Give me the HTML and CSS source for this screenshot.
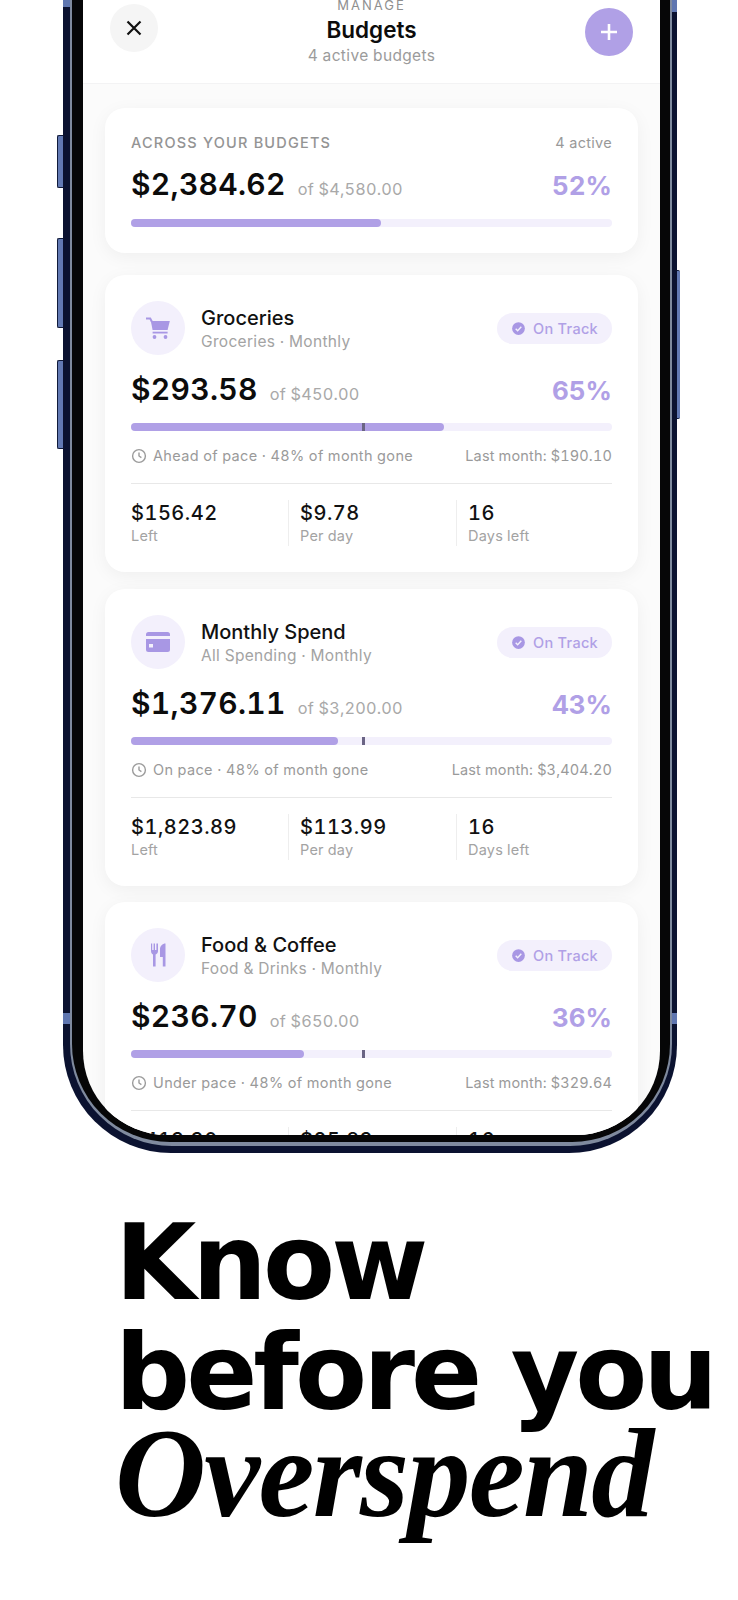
FILE: index.html
```html
<!DOCTYPE html>
<html>

	<head>
		<meta charset="UTF-8">
		<title>Budgets</title>
		<link rel="stylesheet" href="styles.css">
	</head>

	<body>
		<svg class="defs" width="0" height="0">
			<symbol id="clock" viewBox="0 0 16 16">
				<circle cx="8" cy="8" r="6.4" fill="none" stroke="#9b9b9b" stroke-width="1.4"/>
				<path d="M8 4.6V8l2.4 1.6" fill="none" stroke="#9b9b9b" stroke-width="1.4"/>
			</symbol>
			<symbol id="check" viewBox="0 0 16 16">
				<circle cx="8" cy="8" r="6.8" fill="#a897e4"/>
				<path d="M5 8.2l2.1 2.1L11 6.2" fill="none" stroke="#f3f0fc" stroke-width="1.5"/>
			</symbol>
		</svg>

		<div class="phone">
			<span class="side-btn btn-a"></span>
			<span class="side-btn btn-b"></span>
			<span class="side-btn btn-c"></span>
			<span class="side-btn btn-d"></span>
			<span class="band band-l"></span>
			<span class="band band-r"></span>
			<span class="band band-tl"></span>
			<span class="band band-tr"></span>
			<div class="rim">
				<div class="bezel">
					<div class="screen">
						<header class="top">
							<div class="round close">
								<svg width="18" height="18" viewBox="0 0 18 18"><path d="M2.5 2.5l13 13M15.5 2.5l-13 13" stroke="#111" stroke-width="2.2" fill="none"/></svg>
							</div>
							<div class="title">
								<div class="eyebrow">MANAGE</div>
								<h1>Budgets</h1>
								<div class="count">4 active budgets</div>
							</div>
							<div class="round plus">
								<svg width="20" height="20" viewBox="0 0 20 20"><path d="M10 2v16M2 10h16" stroke="#fff" stroke-width="2.6" fill="none"/></svg>
							</div>
						</header>

						<main class="list">
							<section class="card total">
								<div class="between">
									<span class="caps">ACROSS YOUR BUDGETS</span>
									<span class="active">4 active</span>
								</div>
								<div class="amount-row first">
									<div><span class="amount">$2,384.62</span><span class="of">of $4,580.00</span></div>
									<span class="pct">52%</span>
								</div>
								<div class="bar"><div class="fill" style="width:52%"></div></div>
							</section>

							<section class="card">
								<div class="between head">
									<div class="who">
										<div class="icon">
											<svg width="28" height="28" viewBox="0 0 28 28"><path d="M2 4.5h4.2l1.6 3" fill="none" stroke="#a897e4" stroke-width="2"/><path d="M6.8 7h19l-2.2 9H8.6z" fill="#a897e4"/><path d="M8.6 18.6h15" stroke="#a897e4" stroke-width="1.8"/><circle cx="10.5" cy="23" r="1.9" fill="#a897e4"/><circle cx="21.5" cy="23" r="1.9" fill="#a897e4"/></svg>
										</div>
										<div class="names">
											<h2>Groceries</h2>
											<div class="sub">Groceries · Monthly</div>
										</div>
									</div>
									<div class="pill"><svg width="15" height="15"><use href="#check"/></svg>On Track</div>
								</div>
								<div class="amount-row">
									<div><span class="amount">$293.58</span><span class="of">of $450.00</span></div>
									<span class="pct">65%</span>
								</div>
								<div class="bar"><div class="fill" style="width:65%"></div><i class="mark" style="left:48%"></i></div>
								<div class="between meta">
									<span class="pace"><svg width="16" height="16"><use href="#clock"/></svg>Ahead of pace · 48% of month gone</span>
									<span>Last month: $190.10</span>
								</div>
								<div class="stats">
									<div class="stat"><b>$156.42</b><span>Left</span></div>
									<div class="stat"><b>$9.78</b><span>Per day</span></div>
									<div class="stat"><b>16</b><span>Days left</span></div>
								</div>
							</section>

							<section class="card">
								<div class="between head">
									<div class="who">
										<div class="icon">
											<svg width="28" height="28" viewBox="0 0 28 28"><path d="M4.5 4h19A2.5 2.5 0 0 1 26 6.500V8H2V6.500A2.500 2.500 0 0 1 4.500 4zM2 11h24v10.500a2.500 2.500 0 0 1-2.500 2.500h-19A2.500 2.500 0 0 1 2 21.500zM5 16v3.500h4V16z" fill="#a897e4" fill-rule="evenodd"/></svg>
										</div>
										<div class="names">
											<h2>Monthly Spend</h2>
											<div class="sub">All Spending · Monthly</div>
										</div>
									</div>
									<div class="pill"><svg width="15" height="15"><use href="#check"/></svg>On Track</div>
								</div>
								<div class="amount-row">
									<div><span class="amount">$1,376.11</span><span class="of">of $3,200.00</span></div>
									<span class="pct">43%</span>
								</div>
								<div class="bar"><div class="fill" style="width:43%"></div><i class="mark" style="left:48%"></i></div>
								<div class="between meta">
									<span class="pace"><svg width="16" height="16"><use href="#clock"/></svg>On pace · 48% of month gone</span>
									<span>Last month: $3,404.20</span>
								</div>
								<div class="stats">
									<div class="stat"><b>$1,823.89</b><span>Left</span></div>
									<div class="stat"><b>$113.99</b><span>Per day</span></div>
									<div class="stat"><b>16</b><span>Days left</span></div>
								</div>
							</section>

							<section class="card">
								<div class="between head">
									<div class="who">
										<div class="icon">
											<svg width="28" height="28" viewBox="0 0 28 28"><path d="M7 2.500h1.200v6.500h1.400V2.500h1.400v6.500h1.400V2.500H14V10c0 1.900-1.100 3.100-2.400 3.600V25.500H9V13.600C7.900 13.100 7 11.900 7 10zM21.500 2.500V25.500H18.800V16H16V8c0-3 2.500-5.500 5.500-5.500z" fill="#a897e4"/></svg>
										</div>
										<div class="names">
											<h2>Food &amp; Coffee</h2>
											<div class="sub">Food &amp; Drinks · Monthly</div>
										</div>
									</div>
									<div class="pill"><svg width="15" height="15"><use href="#check"/></svg>On Track</div>
								</div>
								<div class="amount-row">
									<div><span class="amount">$236.70</span><span class="of">of $650.00</span></div>
									<span class="pct">36%</span>
								</div>
								<div class="bar"><div class="fill" style="width:36%"></div><i class="mark" style="left:48%"></i></div>
								<div class="between meta">
									<span class="pace"><svg width="16" height="16"><use href="#clock"/></svg>Under pace · 48% of month gone</span>
									<span>Last month: $329.64</span>
								</div>
								<div class="stats">
									<div class="stat"><b>$413.30</b><span>Left</span></div>
									<div class="stat"><b>$25.83</b><span>Per day</span></div>
									<div class="stat"><b>16</b><span>Days left</span></div>
								</div>
							</section>
						</main>
					</div>
				</div>
			</div>
		</div>

		<div class="tagline">
			<div class="sans">Know<br>before you</div>
			<div class="serif">Overspend</div>
		</div>
	</body>

</html>
```

FILE: styles.css
```css
html,
body {
	margin: 0;
	width: 738px;
	height: 1600px;
	overflow: hidden;
	background: #fff;
	font-family: Inter, "Liberation Sans", sans-serif;
	font-variant-numeric: tabular-nums;
}

h1,
h2 {
	margin: 0;
}

.defs {
	position: absolute;
}

/* phone frame */
.phone {
	position: relative;
	width: 614px;
	height: 1153px;
	box-sizing: border-box;
	margin-left: 63px;
	padding: 0 5px 7px 7px;
	background: #0b1230;
	border-radius: 0 0 108px 108px;
}

.rim {
	height: 100%;
	box-sizing: border-box;
	padding: 0 2px 4px 2px;
	background: #7f8a9e;
	border-radius: 0 0 102px 102px;
}

.bezel {
	height: 100%;
	box-sizing: border-box;
	padding: 0 10px 7px 11px;
	background: #060607;
	border-radius: 0 0 98px 98px;
}

.screen {
	height: 100%;
	overflow: hidden;
	background: #fbfbfb;
	border-radius: 0 0 84px 84px;
}

.side-btn {
	position: absolute;
	width: 6px;
	background: #6279b3;
	border: 1px solid #101a3a;
	border-right: 0;
	border-radius: 2px 0 0 2px;
	box-sizing: border-box;
}

.btn-a {
	left: -6px;
	top: 135px;
	height: 53px;
}

.btn-b {
	left: -6px;
	top: 238px;
	height: 90px;
}

.btn-c {
	left: -6px;
	top: 360px;
	height: 89px;
}

.btn-d {
	right: -3px;
	top: 270px;
	width: 3px;
	height: 149px;
	border-width: 1px 0;
	border-radius: 0 2px 2px 0;
}

.band {
	position: absolute;
	width: 7px;
	background: #5f76b0;
}

.band-l {
	left: 0;
	top: 1013px;
	height: 11px;
}

.band-r {
	right: 0;
	width: 5px;
	top: 1013px;
	height: 11px;
}

.band-tl {
	left: 0;
	top: 0;
	height: 7px;
}

.band-tr {
	right: 0;
	width: 5px;
	top: 0;
	height: 12px;
}

/* screen header */
.top {
	display: flex;
	justify-content: space-between;
	align-items: flex-start;
	height: 84px;
	box-sizing: border-box;
	padding: 4px 27px 0;
	background: #fff;
	border-bottom: 1px solid #f3f3f4;
}

.round {
	display: flex;
	align-items: center;
	justify-content: center;
	width: 48px;
	height: 48px;
	border-radius: 50%;
}

.close {
	background: #f5f5f5;
}

.plus {
	margin-top: 4px;
	background: #b0a0e6;
}

.title {
	margin-top: -7px;
	text-align: center;
}

.eyebrow {
	font-size: 13px;
	line-height: 16px;
	letter-spacing: 2px;
	color: #8f8f8f;
}

h1 {
	margin-top: 4px;
	font-size: 22.5px;
	line-height: 26px;
	font-weight: 600;
	color: #0c0c0c;
}

.count {
	margin-top: 3px;
	font-size: 15.5px;
	line-height: 20px;
	letter-spacing: 0.35px;
	color: #9b9b9b;
}

/* cards */
.list {
	display: flex;
	flex-direction: column;
	gap: 17px;
	padding: 24px 22px 0;
}

.card {
	padding: 26px;
	height: 297px;
	box-sizing: border-box;
	flex-shrink: 0;
	background: #fff;
	border-radius: 20px;
	box-shadow: 0 4px 18px rgba(0, 0, 0, 0.05);
}

.card:last-child {
	margin-top: -1px;
}

.total {
	height: 145px;
	margin-bottom: 5px;
}

.between {
	display: flex;
	justify-content: space-between;
	align-items: center;
}

.caps {
	font-size: 14.5px;
	line-height: 18px;
	font-weight: 500;
	letter-spacing: 1.2px;
	color: #949494;
}

.active {
	font-size: 14.500px;
	line-height: 18px;
	letter-spacing: 0.3px;
	color: #999;
}

.who {
	display: flex;
	align-items: center;
	gap: 16px;
}

.names {
	padding-top: 3px;
}

.icon {
	display: flex;
	align-items: center;
	justify-content: center;
	width: 54px;
	height: 54px;
	border-radius: 50%;
	background: #f3f0fc;
}

h2 {
	font-size: 20px;
	line-height: 24px;
	font-weight: 500;
	color: #111;
}

.sub {
	margin-top: 1px;
	font-size: 15.5px;
	line-height: 22px;
	letter-spacing: 0.32px;
	color: #a3a3a3;
}

.pill {
	display: flex;
	align-items: center;
	gap: 7px;
	height: 31px;
	padding: 0 14px;
	border-radius: 16px;
	background: #f3f0fc;
	font-size: 14.500px;
	font-weight: 500;
	letter-spacing: 0.3px;
	color: #b0a0e6;
}

.amount-row {
	display: flex;
	justify-content: space-between;
	align-items: baseline;
	height: 36px;
	margin-top: 16px;
	line-height: 36px;
}

.amount-row.first {
	margin-top: 14px;
}

.amount {
	font-size: 30px;
	font-weight: 600;
	letter-spacing: 0.3px;
	color: #0c0c0c;
}

.of {
	margin-left: 12px;
	font-size: 16.3px;
	letter-spacing: 0.2px;
	color: #a9a9a9;
}

.pct {
	font-size: 26px;
	font-weight: 700;
	color: #b0a0e6;
}

.bar {
	position: relative;
	height: 8px;
	margin-top: 16px;
	border-radius: 4px;
	background: #f3f0fc;
}

.first + .bar {
	margin-top: 17px;
}

.fill {
	height: 100%;
	border-radius: 4px;
	background: #b0a0e6;
}

.mark {
	position: absolute;
	top: 0;
	width: 3px;
	height: 8px;
	background: #6a6484;
}

.meta {
	margin-top: 16px;
	font-size: 14.500px;
	line-height: 18px;
	letter-spacing: 0.35px;
	color: #9a9a9a;
}

.meta span:last-child {
	letter-spacing: 0.15px;
}

.pace {
	display: flex;
	align-items: center;
	gap: 6px;
}

.stats {
	display: grid;
	grid-template-columns: 157px 168px 1fr;
	margin-top: 18px;
	padding-top: 16px;
	border-top: 1px solid #e8e8e8;
}

.stat {
	display: flex;
	flex-direction: column;
	padding-left: 11px;
	border-left: 1px solid #eee;
}

.stat:first-child {
	padding-left: 0;
	border-left: 0;
}

.stat b {
	font-size: 20px;
	line-height: 26px;
	font-weight: 500;
	letter-spacing: 0.5px;
	color: #111;
}

.stat span {
	font-size: 14.500px;
	line-height: 20px;
	letter-spacing: 0.2px;
	color: #a3a3a3;
}

/* headline */
.tagline {
	margin: 55px 0 0 115px;
	color: #000;
}

.sans {
	font-family: "DejaVu Sans", sans-serif;
	font-size: 105px;
	line-height: 110px;
	font-weight: 700;
	letter-spacing: -4px;
	white-space: nowrap;
}

.serif {
	margin-top: -9px;
	font-family: "Liberation Serif", serif;
	font-size: 126px;
	line-height: 110px;
	font-style: italic;
	font-weight: 700;
	letter-spacing: -1.7px;
	white-space: nowrap;
}
```
